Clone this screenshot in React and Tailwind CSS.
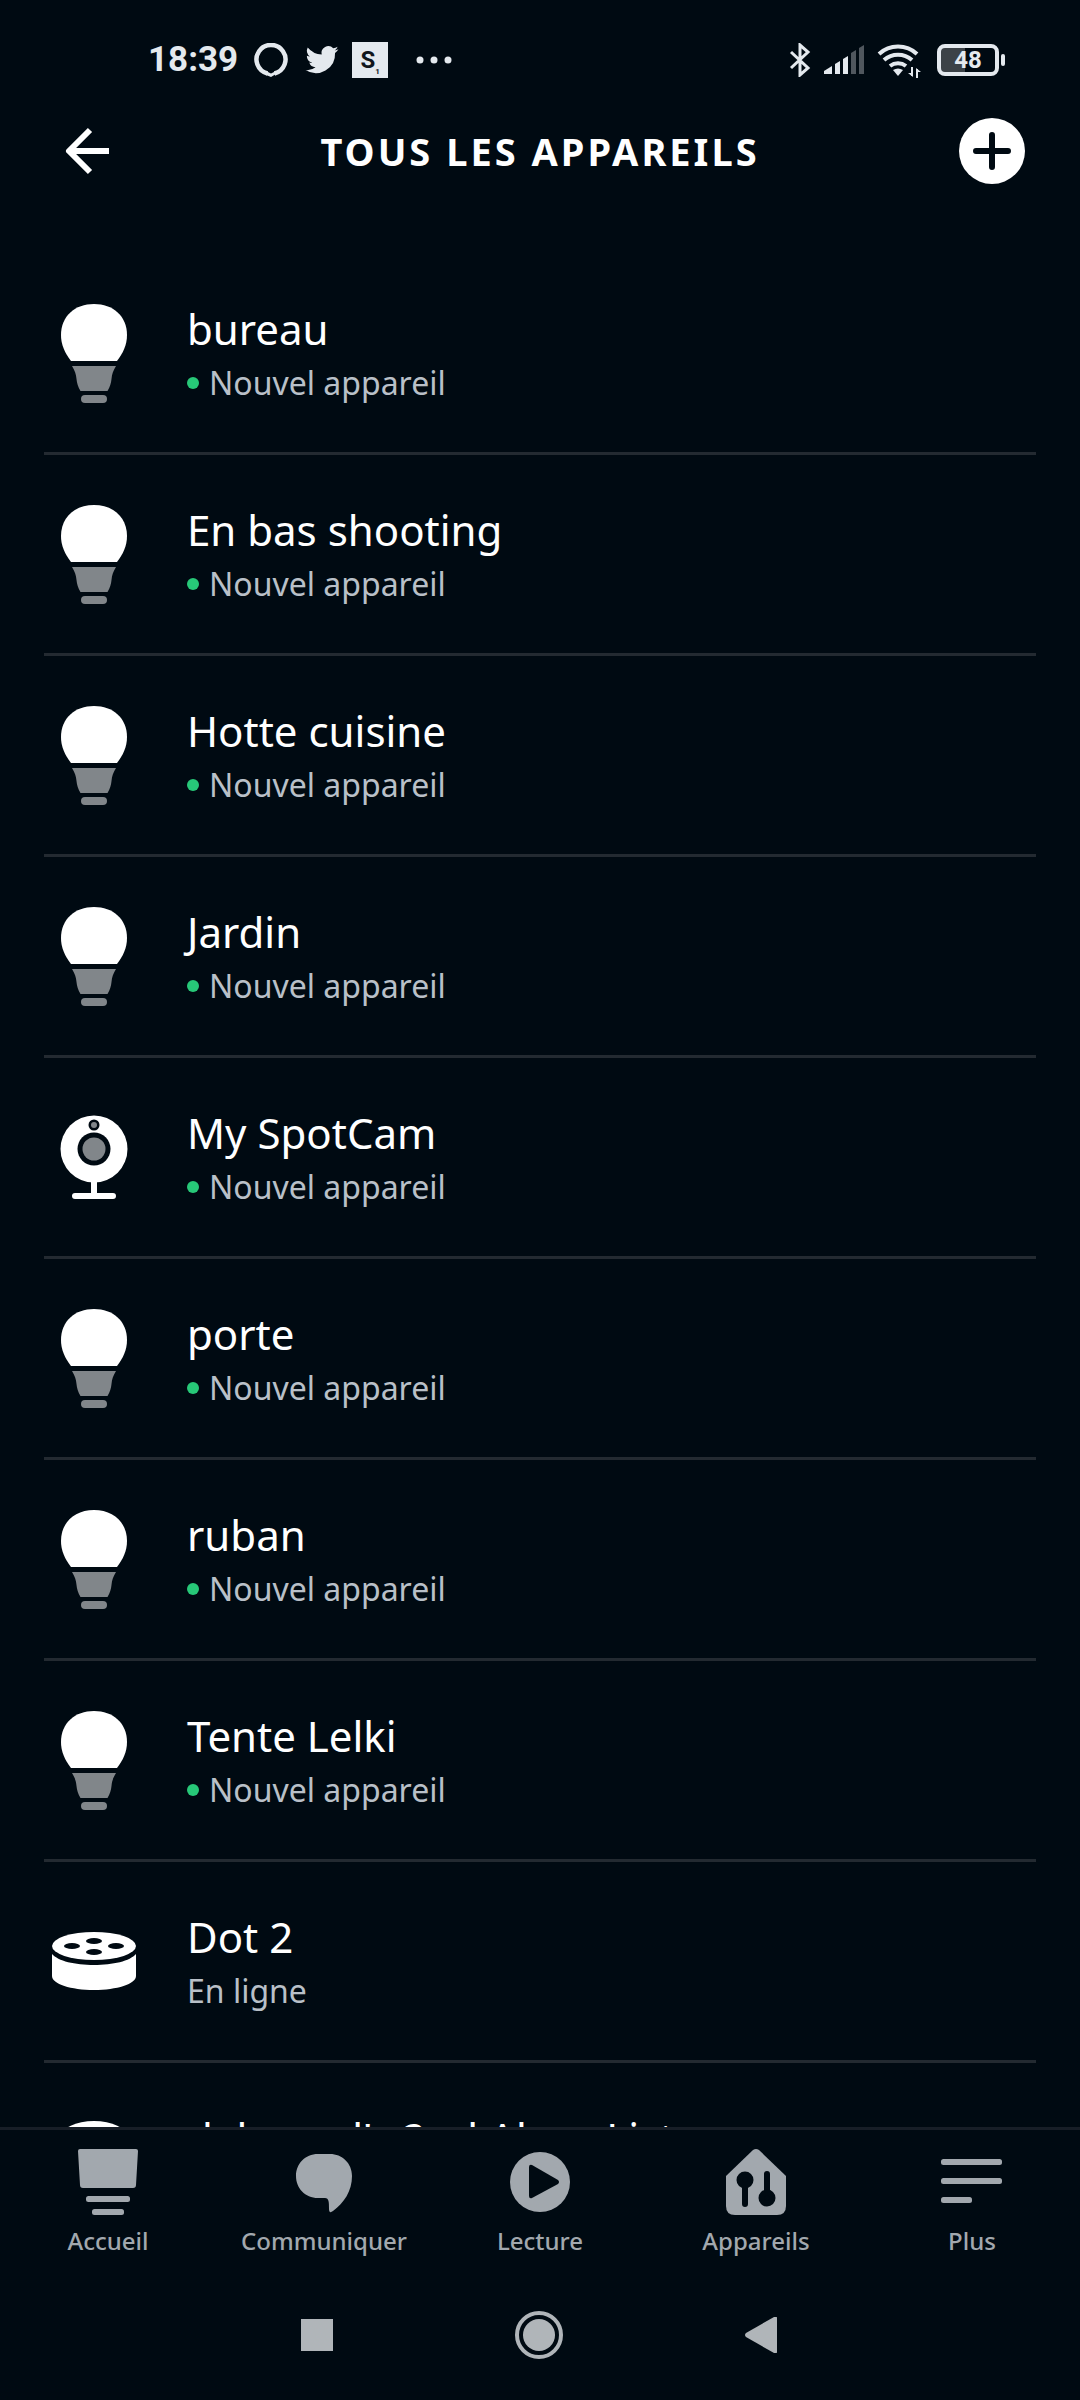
const devices = [
  { name: 'bureau', status: 'Nouvel appareil', icon: 'bulb', isNew: true },
  { name: 'En bas shooting', status: 'Nouvel appareil', icon: 'bulb', isNew: true },
  { name: 'Hotte cuisine', status: 'Nouvel appareil', icon: 'bulb', isNew: true },
  { name: 'Jardin', status: 'Nouvel appareil', icon: 'bulb', isNew: true },
  { name: 'My SpotCam', status: 'Nouvel appareil', icon: 'camera', isNew: true },
  { name: 'porte', status: 'Nouvel appareil', icon: 'bulb', isNew: true },
  { name: 'ruban', status: 'Nouvel appareil', icon: 'bulb', isNew: true },
  { name: 'Tente Lelki', status: 'Nouvel appareil', icon: 'bulb', isNew: true },
  { name: 'Dot 2', status: 'En ligne', icon: 'dot' },
  { name: "daboned's 2nd Alexa List", status: 'En ligne', icon: 'echo' },
]

function BulbIcon() {
  return (
    <svg width="68" height="100" viewBox="0 0 68 100" aria-hidden="true">
      <path d="M34 1C53 1 67 13 67 32c0 10-4 18-10 26H11C5 50 1 42 1 32 1 13 15 1 34 1z" fill="#fff" />
      <path d="M12 63h44c-3 5-4 8-4.500 13-.4 4-1.500 8-4 12h-27c-2.500-4-3.600-8-4-12C16 71 15 68 12 63z" fill="#81868a" />
      <rect x="21" y="92" width="26" height="8" rx="4" fill="#81868a" />
    </svg>
  )
}

function CameraIcon() {
  return (
    <svg width="68" height="84" viewBox="0 0 68 84" aria-hidden="true">
      <circle cx="34" cy="34" r="33.500" fill="#fff" />
      <circle cx="34" cy="34" r="16.500" fill="#000a12" />
      <circle cx="34" cy="34" r="11.500" fill="#81868a" />
      <circle cx="34" cy="10" r="5.500" fill="#000a12" />
      <circle cx="34" cy="10" r="3" fill="#81868a" />
      <path d="M31 66h6v12h16a3 3 0 0 1 0 6H15a3 3 0 0 1 0-6h16z" fill="#fff" />
    </svg>
  )
}

function DotIcon() {
  return (
    <svg width="84" height="58" viewBox="0 0 84 58" aria-hidden="true">
      <ellipse cx="42" cy="14" rx="42" ry="14" fill="#fff" />
      <path d="M0 22c6 7 23 11 42 11s36-4 42-11v22c0 8-19 14-42 14S0 52 0 44z" fill="#fff" />
      <g fill="#000a12">
        <ellipse cx="42" cy="9" rx="8" ry="3" />
        <ellipse cx="20" cy="14" rx="8" ry="3" />
        <ellipse cx="64" cy="14" rx="8" ry="3" />
        <ellipse cx="42" cy="20" rx="8" ry="3" />
      </g>
    </svg>
  )
}

function EchoIcon() {
  return (
    <svg width="68" height="84" viewBox="0 0 68 84" aria-hidden="true">
      <ellipse cx="34" cy="17" rx="33" ry="16" fill="#fff" />
      <ellipse cx="34" cy="17" rx="25" ry="10" fill="#81868a" />
      <path d="M1 24c8 16 58 16 66 0v44c0 22-66 22-66 0z" fill="#fff" />
    </svg>
  )
}

const deviceIcons = {
  bulb: BulbIcon,
  camera: CameraIcon,
  dot: DotIcon,
  echo: EchoIcon,
}

function StatusBar() {
  return (
    <div className="flex h-20 shrink-0 items-end justify-between pl-[148px] pr-[75px] text-[#e4e9ee]">
      <div className="flex h-10 items-center">
        <span className="font-[Roboto,sans-serif] text-[35px] leading-10 font-bold">18:39</span>
        <svg className="ml-4" width="34" height="34" viewBox="0 0 34 34" aria-hidden="true">
          <path
            d="M13.500 30.500A14.500 14.500 0 1 1 20.500 30.500"
            fill="none"
            stroke="currentColor"
            strokeWidth="4.500"
          />
          <path d="M12 28l5 2.500 5-2.500v3l-5 3-5-2z" fill="currentColor" />
        </svg>
        <svg className="ml-4" width="36" height="36" viewBox="0 0 24 24" fill="currentColor" aria-hidden="true">
          <path d="M23 4.900a9 9 0 0 1-2.600.7 4.500 4.500 0 0 0 2-2.500 9 9 0 0 1-2.900 1.100 4.500 4.500 0 0 0-7.700 4.100A12.800 12.800 0 0 1 2.500 3.600a4.500 4.500 0 0 0 1.400 6 4.500 4.500 0 0 1-2-.5 4.500 4.500 0 0 0 3.600 4.500 4.500 4.500 0 0 1-2 .1 4.500 4.500 0 0 0 4.200 3.100A9 9 0 0 1 1 18.700a12.800 12.800 0 0 0 19.700-11.400A9 9 0 0 0 23 4.900z" />
        </svg>
        <span className="ml-3 flex size-9 items-center justify-center bg-[#e4e9ee] font-[Roboto,sans-serif] text-2xl font-bold text-[#10161c]">
          S<span className="self-end text-[8px] leading-3">1</span>
        </span>
        <svg className="ml-7" width="36" height="8" viewBox="0 0 36 8" fill="currentColor" aria-hidden="true">
          <circle cx="4" cy="4" r="3.500" />
          <circle cx="18" cy="4" r="3.500" />
          <circle cx="32" cy="4" r="3.500" />
        </svg>
      </div>

      <div className="flex h-10 items-center">
        <svg width="22" height="34" viewBox="0 0 22 34" fill="none" stroke="currentColor" strokeWidth="3" aria-hidden="true">
          <path d="M2 9l17 16-8 7V2l8 7L2 25" />
        </svg>
        <svg className="ml-3" width="42" height="30" viewBox="0 0 42 30" fill="currentColor" aria-hidden="true">
          <path d="M1 29v-3l8-5v8z" />
          <path d="M12 19l5-3v13h-5z" />
          <path d="M20 14l5-3v18h-5z" />
          <path d="M28 8l5-3v24h-5z" opacity=".35" />
          <path d="M36 3l5-3v29h-5z" opacity=".35" />
        </svg>
        <svg className="ml-3" width="44" height="36" viewBox="0 0 44 36" fill="none" stroke="currentColor" aria-hidden="true">
          <path d="M2 12a28 28 0 0 1 38 0M7 18a21 21 0 0 1 28 0M13 24a13 13 0 0 1 16 0" strokeWidth="4" />
          <path d="M16 28q5-3 10 0l-5 6z" fill="currentColor" stroke="none" />
          <path d="M35 25v9M40 27v9" strokeWidth="2" />
          <path d="M31 31h5v4zM44 30h-5v-4z" fill="currentColor" stroke="none" />
        </svg>
        <span className="ml-4 flex h-8 w-[62px] items-center justify-center rounded-lg border-4 border-current bg-linear-to-r from-[#3c4247] from-45% to-transparent to-45% font-[Roboto,sans-serif] text-2xl leading-6 font-bold">
          48
        </span>
        <span className="ml-0.5 h-3 w-1 rounded-sm bg-current" />
      </div>
    </div>
  )
}

function Header() {
  return (
    <header className="grid h-[142px] shrink-0 grid-cols-[1fr_auto_1fr] items-center px-[55px]">
      <button type="button" aria-label="Retour" className="flex size-16 items-center justify-center">
        <svg width="48" height="48" viewBox="0 0 48 48" fill="none" stroke="#fff" strokeWidth="6" aria-hidden="true">
          <path d="M27 3L6 24l21 21M6 24h40" strokeLinejoin="round" />
        </svg>
      </button>
      <h1 className="text-[38px] leading-[52px] font-bold tracking-[3px]">TOUS LES APPAREILS</h1>
      <button
        type="button"
        aria-label="Ajouter un appareil"
        className="flex size-[66px] items-center justify-center justify-self-end rounded-full bg-white"
      >
        <svg width="38" height="38" viewBox="0 0 38 38" stroke="#000a12" strokeWidth="6" strokeLinecap="round" aria-hidden="true">
          <path d="M19 3v32M3 19h32" />
        </svg>
      </button>
    </header>
  )
}

function DeviceRow({ device }) {
  const Icon = deviceIcons[device.icon]
  return (
    <li className="h-[201px] border-b-[3px] border-[#232a31]">
      <a href="#" className="flex h-full items-center gap-[44px]">
        <span className="flex w-[99px] shrink-0 justify-center">
          <Icon />
        </span>
        <span className="flex flex-col pt-1">
          <span className="text-[42px] leading-[56px] text-white">{device.name}</span>
          <span className="flex items-center gap-[10px] text-[32px] leading-[52px] text-[#b9c0c8]">
            {device.isNew && <span className="size-3 rounded-full bg-[#27c878]" />}
            {device.status}
          </span>
        </span>
      </a>
    </li>
  )
}

const tabs = [
  {
    label: 'Accueil',
    icon: (
      <>
        <path d="M5 0h56q2 0 2 2l-2 34q0 3-3 3H8q-3 0-3-3L3 2q0-2 2-2z" />
        <rect x="11" y="47" width="44" height="6" rx="2.500" />
        <rect x="17" y="60" width="32" height="6" rx="2.500" />
      </>
    ),
  },
  {
    label: 'Communiquer',
    icon: (
      <path d="M27 5h12c12 0 22 9 22 22 0 15-8 27-19 35q-4 3-4-2c0-7 0-11-4-11h-7C14 49 5 39 5 27S14 5 27 5z" />
    ),
  },
  {
    label: 'Lecture',
    icon: (
      <>
        <circle cx="33" cy="33" r="30" />
        <path d="M22 18q0-3 3-2l26 15q2 2 0 4L25 49q-3 1-3-2z" fill="#000a12" />
      </>
    ),
  },
  {
    label: 'Appareils',
    icon: (
      <>
        <path d="M30 1q3-2 6 0l27 26v30q0 9-9 9H12q-9 0-9-9V27z" />
        <g fill="#000a12" stroke="#000a12" strokeWidth="6" strokeLinecap="round">
          <path d="M22 32v23M44 25v24" />
          <circle cx="22" cy="31" r="5.500" />
          <circle cx="44" cy="49" r="5.500" />
        </g>
      </>
    ),
  },
  {
    label: 'Plus',
    icon: (
      <>
        <rect x="2" y="10" width="61" height="6" rx="2.500" />
        <rect x="2" y="29" width="61" height="6" rx="2.500" />
        <rect x="2" y="48" width="31" height="6" rx="2.500" />
      </>
    ),
  },
]

function TabBar() {
  return (
    <nav className="grid h-[143px] shrink-0 grid-cols-5 border-t-[3px] border-[#171e27] pt-[19px]">
      {tabs.map((tab) => (
        <a key={tab.label} href="#" className="flex flex-col items-center gap-2 text-[#a2a8ae]">
          <svg width="66" height="66" viewBox="0 0 66 66" fill="currentColor" aria-hidden="true">
            {tab.icon}
          </svg>
          <span className="text-2xl leading-9 font-medium">{tab.label}</span>
        </a>
      ))}
    </nav>
  )
}

function SystemBar() {
  return (
    <div className="flex h-[130px] shrink-0 items-center justify-center gap-[182px] pr-0.5">
      <button type="button" aria-label="Applications récentes" className="size-8 bg-[#b0b5b9]" />
      <button
        type="button"
        aria-label="Écran d'accueil"
        className="flex size-12 items-center justify-center rounded-full border-4 border-[#b0b5b9]"
      >
        <span className="size-8 rounded-full bg-[#b0b5b9]" />
      </button>
      <button type="button" aria-label="Précédent">
        <svg width="32" height="36" viewBox="0 0 32 36" fill="#b0b5b9" aria-hidden="true">
          <path d="M1 16L29 0q3-1 3 1v34q0 2-3 1L1 20q-2-2 0-4z" />
        </svg>
      </button>
    </div>
  )
}

export default function App() {
  return (
    <div className="flex h-screen flex-col overflow-hidden bg-[#000a12] font-['Noto_Sans','Open_Sans',sans-serif] text-white">
      <StatusBar />
      <Header />
      <main className="min-h-0 flex-1 overflow-hidden px-11 pt-8">
        <ul>
          {devices.map((device) => (
            <DeviceRow key={device.name} device={device} />
          ))}
        </ul>
      </main>
      <TabBar />
      <SystemBar />
    </div>
  )
}
